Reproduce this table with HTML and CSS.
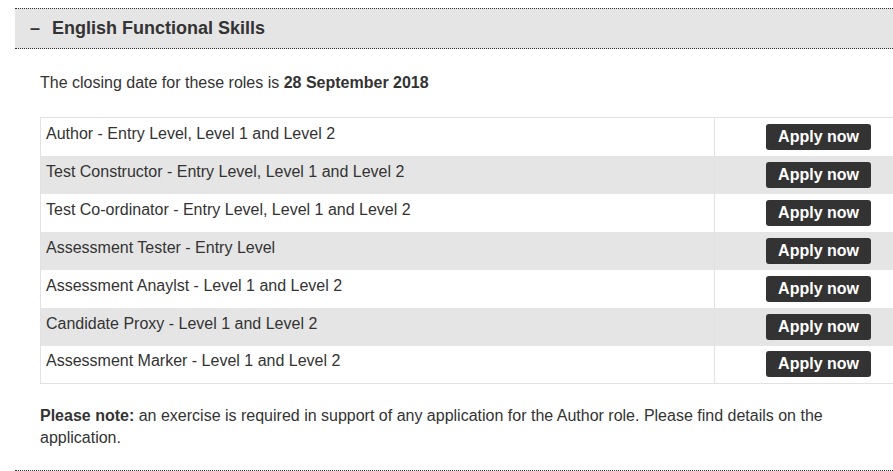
FILE: index.html
```html
<!DOCTYPE html>
<html>
<head>
<meta charset="utf-8">
<link rel="stylesheet" href="styles.css">
</head>
<body>
<div class="section">
  <div class="section-head">
    <span class="toggle">&ndash;</span>
    <span class="title">English Functional Skills</span>
  </div>
  <div class="section-body">
    <p class="closing">The closing date for these roles is <strong>28 September 2018</strong></p>
    <table class="roles">
      <tr><td class="role">Author - Entry Level, Level 1 and Level 2</td><td class="act"><a class="btn">Apply now</a></td></tr>
      <tr class="alt"><td class="role">Test Constructor - Entry Level, Level 1 and Level 2</td><td class="act"><a class="btn">Apply now</a></td></tr>
      <tr><td class="role">Test Co-ordinator - Entry Level, Level 1 and Level 2</td><td class="act"><a class="btn">Apply now</a></td></tr>
      <tr class="alt"><td class="role">Assessment Tester - Entry Level</td><td class="act"><a class="btn">Apply now</a></td></tr>
      <tr><td class="role">Assessment Anaylst - Level 1 and Level 2</td><td class="act"><a class="btn">Apply now</a></td></tr>
      <tr class="alt"><td class="role">Candidate Proxy - Level 1 and Level 2</td><td class="act"><a class="btn">Apply now</a></td></tr>
      <tr><td class="role">Assessment Marker - Level 1 and Level 2</td><td class="act"><a class="btn">Apply now</a></td></tr>
    </table>
    <p class="note"><strong>Please note:</strong> an exercise is required in support of any application for the Author role. Please find details on the application.</p>
  </div>
</div>
</body>
</html>
```
FILE: styles.css
```css
html, body {
  margin: 0;
  padding: 0;
  overflow: hidden;
  background: #fff;
}
body {
  font-family: "Liberation Sans", Arial, sans-serif;
  color: #333;
  width: 893px;
  height: 471px;
}
.section {
  margin-left: 15px;
  width: 940px;
  padding-top: 8px;
  border-bottom: 1px dotted #333;
}
.section-head {
  height: 39px;
  background: #e5e5e5;
  border-top: 1px dotted #333;
  border-bottom: 1px dotted #333;
  display: flex;
  align-items: center;
  font-weight: bold;
  font-size: 18px;
  color: #333;
}
.toggle {
  width: 22px;
  margin-left: 15px;
}
.section-body {
  padding: 0 25px;
}
.closing {
  font-size: 16px;
  margin: 25px 0 0;
  line-height: 18px;
  height: 43px;
}
.roles {
  border-collapse: collapse;
  width: 100%;
  font-size: 16px;
  border: 1px solid #e2e2e2;
}
.roles tr {
  height: 38px;
}
.roles td {
  padding: 0 5px;
  vertical-align: middle;
}
.roles td.role {
  width: 663px;
  border-right: 1px solid #e2e2e2;
  padding-bottom: 6px;
}
.roles tr.alt td {
  background: #e5e5e5;
}
.roles td.act {
  text-align: right;
  padding-right: 58px;
}
.btn {
  display: inline-block;
  background: #333;
  color: #fff;
  font-weight: bold;
  font-size: 16px;
  line-height: 26px;
  padding: 0 12px;
  border-radius: 3px;
}
.note {
  font-size: 16px;
  line-height: 22px;
  margin: 21px 0 0;
  padding-bottom: 21px;
  width: 830px;
}
```
